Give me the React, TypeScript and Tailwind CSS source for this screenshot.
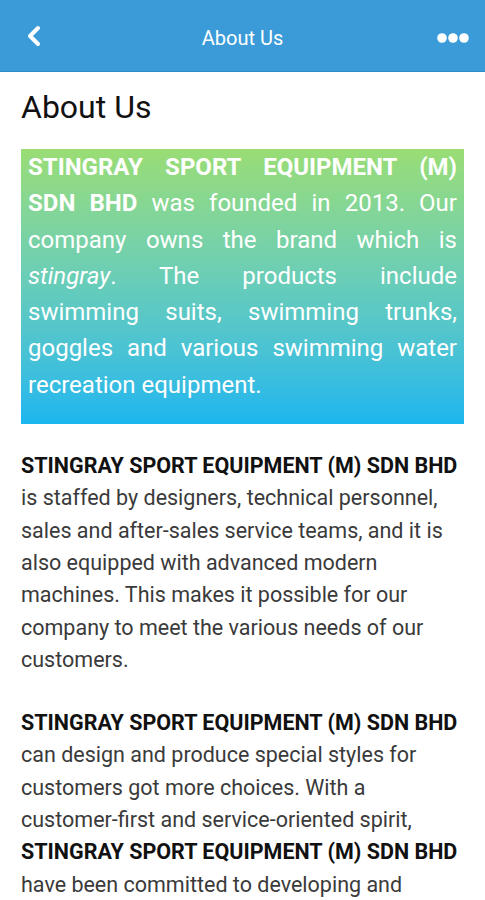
export default function App() {
  return (
    <div className="min-h-screen bg-white" style={{ fontFamily: "Roboto, 'Noto Sans', sans-serif" }}>
      <header className="grid h-[72px] grid-cols-[1fr_auto_1fr] items-center border-b border-[#2f8cc6] bg-[#3a9bd8] px-[16px] text-white">
        <button className="flex h-10 w-12 items-center pl-[10px]" aria-label="Back">
          <svg width="16" height="22" viewBox="0 0 16 22" fill="none">
            <path d="M12 3 L4 11 L12 19" stroke="white" strokeWidth="4" strokeLinecap="round" strokeLinejoin="round" />
          </svg>
        </button>
        <h1 className="pt-[5px] text-[20px] font-normal">About Us</h1>
        <button className="flex h-10 w-10 items-center justify-self-end justify-end pt-[5px]" aria-label="More">
          <svg width="32" height="10" viewBox="0 0 32 10" fill="white">
            <circle cx="5" cy="5" r="4.8" />
            <circle cx="16" cy="5" r="4.8" />
            <circle cx="27" cy="5" r="4.8" />
          </svg>
        </button>
      </header>

      <main className="px-[21px]">
        <h2 className="mt-[15px] text-[32px] font-normal leading-[40px] text-[#111]">About Us</h2>

        <div className="mt-[22px] bg-gradient-to-b from-[#9add74] to-[#1ab6ef] px-[7px] pb-[21px] text-justify text-[24px] leading-[36.3px] text-white">
          <p>
            <b className="font-bold">STINGRAY SPORT EQUIPMENT (M) SDN BHD</b> was founded in 2013. Our company owns the
            brand which is <i>stingray</i>. The products include swimming suits, swimming trunks, goggles and various
            swimming water recreation equipment.
          </p>
        </div>

        <div className="mt-[26px] text-[21.5px] leading-[32.3px] text-[#3a3a3a]">
          <p>
            <b className="font-bold text-[#111]">STINGRAY SPORT EQUIPMENT (M) SDN BHD</b> is staffed by designers,
            technical personnel, sales and after-sales service teams, and it is also equipped with advanced modern
            machines. This makes it possible for our company to meet the various needs of our customers.
          </p>
          <p className="mt-[31px]">
            <b className="font-bold text-[#111]">STINGRAY SPORT EQUIPMENT (M) SDN BHD</b> can design and produce special
            styles for customers got more choices. With a customer-first and service-oriented spirit,{" "}
            <b className="font-bold text-[#111]">STINGRAY SPORT EQUIPMENT (M) SDN BHD</b> have been committed to
            developing and innovating products to provide customers with better quality and services.
          </p>
        </div>
      </main>
    </div>
  );
}
